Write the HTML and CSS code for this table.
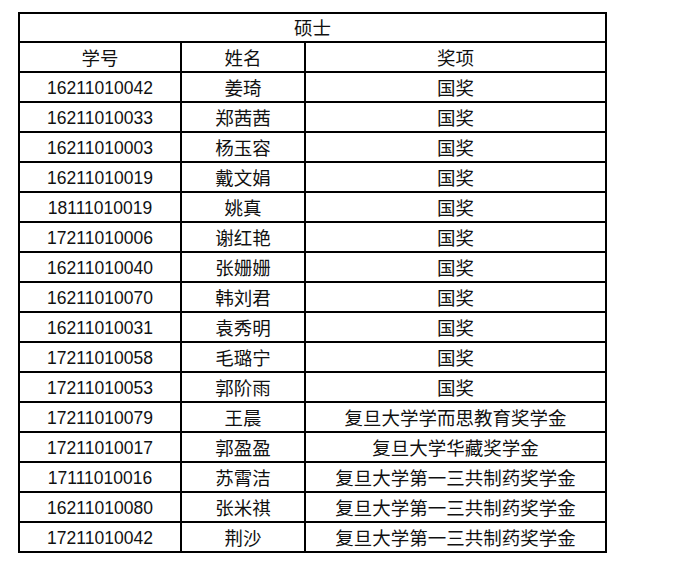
FILE: index.html
```html
<!DOCTYPE html>
<html lang="zh">
<head>
<meta charset="utf-8">
<title>硕士</title>
<link rel="stylesheet" href="styles.css">
</head>
<body>
<table class="sheet">
  <colgroup>
    <col class="c-id">
    <col class="c-name">
    <col class="c-award">
  </colgroup>
  <thead>
    <tr><th colspan="3" class="title">硕士</th></tr>
    <tr><th>学号</th><th>姓名</th><th>奖项</th></tr>
  </thead>
  <tbody>
    <tr><td class="num">16211010042</td><td>姜琦</td><td>国奖</td></tr>
    <tr><td class="num">16211010033</td><td>郑茜茜</td><td>国奖</td></tr>
    <tr><td class="num">16211010003</td><td>杨玉容</td><td>国奖</td></tr>
    <tr><td class="num">16211010019</td><td>戴文娟</td><td>国奖</td></tr>
    <tr><td class="num">18111010019</td><td>姚真</td><td>国奖</td></tr>
    <tr><td class="num">17211010006</td><td>谢红艳</td><td>国奖</td></tr>
    <tr><td class="num">16211010040</td><td>张姗姗</td><td>国奖</td></tr>
    <tr><td class="num">16211010070</td><td>韩刘君</td><td>国奖</td></tr>
    <tr><td class="num">16211010031</td><td>袁秀明</td><td>国奖</td></tr>
    <tr><td class="num">17211010058</td><td>毛璐宁</td><td>国奖</td></tr>
    <tr><td class="num">17211010053</td><td>郭阶雨</td><td>国奖</td></tr>
    <tr><td class="num">17211010079</td><td>王晨</td><td>复旦大学学而思教育奖学金</td></tr>
    <tr><td class="num">17211010017</td><td>郭盈盈</td><td>复旦大学华藏奖学金</td></tr>
    <tr><td class="num">17111010016</td><td>苏霄洁</td><td>复旦大学第一三共制药奖学金</td></tr>
    <tr><td class="num">16211010080</td><td>张米祺</td><td>复旦大学第一三共制药奖学金</td></tr>
    <tr><td class="num">17211010042</td><td>荆沙</td><td>复旦大学第一三共制药奖学金</td></tr>
  </tbody>
</table>
</body>
</html>
```

FILE: styles.css
```css
html, body {
  margin: 0;
  padding: 0;
  background: #ffffff;
}

.sheet {
  margin: 12px 0 0 18px;
  border-collapse: separate;
  border-spacing: 0;
  table-layout: fixed;
  width: 589px;
  border-top: 2px solid #000;
  border-left: 2px solid #000;
  font-family: "Noto Sans CJK SC", "Liberation Sans", sans-serif;
  font-size: 18.5px;
  color: #111;
}

.c-id { width: 162px; }
.c-name { width: 124px; }
.c-award { width: 301px; }

.sheet th,
.sheet td {
  padding: 0;
  height: 28px;
  line-height: 28px;
  border-right: 2px solid #000;
  border-bottom: 2px solid #000;
  text-align: center;
  vertical-align: middle;
  font-weight: normal;
  white-space: nowrap;
  overflow: hidden;
}

.sheet th.title {
  height: 27px;
  line-height: 27px;
}

.sheet td.num {
  font-family: "Liberation Sans", sans-serif;
  font-size: 17.5px;
  height: 26px;
  line-height: 26px;
  padding-top: 2px;
}
```
